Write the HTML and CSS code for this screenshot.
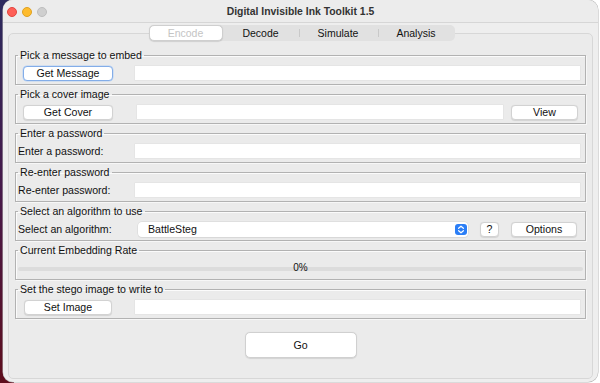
FILE: index.html
```html
<!DOCTYPE html>
<html lang="en">
<head>
<meta charset="utf-8">
<title>Digital Invisible Ink Toolkit 1.5</title>
<link rel="stylesheet" href="styles.css">
</head>
<body>
<div class="desk">
  <div class="window">
    <div class="titlebar">
      <div class="lights">
        <span class="light red"></span>
        <span class="light yellow"></span>
        <span class="light gray"></span>
      </div>
      <div class="title">Digital Invisible Ink Toolkit 1.5</div>
      <div></div>
    </div>

    <div class="tabs">
      <span class="tab active t-encode">Encode</span>
      <span class="tab t-decode">Decode</span>
      <span class="tab t-simulate divided">Simulate</span>
      <span class="tab t-analysis divided">Analysis</span>
    </div>

    <div class="pane">
      <fieldset class="group">
        <legend>Pick a message to embed</legend>
        <div class="row">
          <div class="lead"><button class="btn lead-btn focus">Get Message</button></div>
          <div class="field"></div>
        </div>
      </fieldset>

      <fieldset class="group">
        <legend>Pick a cover image</legend>
        <div class="row">
          <div class="lead lead-cover"><button class="btn lead-btn">Get Cover</button></div>
          <div class="field"></div>
          <button class="btn view">View</button>
        </div>
      </fieldset>

      <fieldset class="group">
        <legend>Enter a password</legend>
        <div class="row">
          <div class="lead lead-pw">Enter a password:</div>
          <div class="field"></div>
        </div>
      </fieldset>

      <fieldset class="group">
        <legend>Re-enter password</legend>
        <div class="row">
          <div class="lead lead-pw">Re-enter password:</div>
          <div class="field"></div>
        </div>
      </fieldset>

      <fieldset class="group">
        <legend>Select an algorithm to use</legend>
        <div class="row">
          <div class="lead lead-algo">Select an algorithm:</div>
          <div class="select">
            <span class="select-text">BattleSteg</span>
            <svg class="stepper" width="12" height="11" viewBox="0 0 12 11">
              <rect x="0" y="0" width="12" height="11" rx="3" fill="#2b7ef6"/>
              <path d="M3.6 4.3 L6 2.2 L8.4 4.3" fill="none" stroke="#fff" stroke-width="1.2" stroke-linecap="round" stroke-linejoin="round"/>
              <path d="M3.6 6.7 L6 8.8 L8.4 6.7" fill="none" stroke="#fff" stroke-width="1.2" stroke-linecap="round" stroke-linejoin="round"/>
            </svg>
          </div>
          <button class="btn help">?</button>
          <button class="btn options">Options</button>
        </div>
      </fieldset>

      <fieldset class="group rate">
        <legend>Current Embedding Rate</legend>
        <div class="row progress">
          <div class="bar"></div>
          <div class="bar-text">0%</div>
        </div>
      </fieldset>

      <fieldset class="group">
        <legend>Set the stego image to write to</legend>
        <div class="row">
          <div class="lead"><button class="btn lead-btn set">Set Image</button></div>
          <div class="field"></div>
        </div>
      </fieldset>

      <div class="go-row">
        <button class="btn go">Go</button>
      </div>
    </div>
  </div>
</div>
</body>
</html>
```

FILE: styles.css
```css
html, body {
  margin: 0;
  padding: 0;
}

body {
  width: 600px;
  height: 383px;
  overflow: hidden;
  background: #ffffff;
  font-family: "Liberation Sans", Arial, sans-serif;
  font-size: 10.6px;
  color: #111111;
}

.desk {
  box-sizing: border-box;
  height: 383px;
  padding-left: 3px;
  background:
    linear-gradient(180deg, #2c2a5e 0%, #47194a 50%, #5e0e1d 100%) left top / 14px 100% no-repeat,
    #ffffff;
}

.window {
  box-sizing: border-box;
  width: 595px;
  height: 382px;
  background: #eeeeee;
  border-radius: 10px;
  box-shadow: 0 0 0 0.5px #b5b5b5;
  display: flex;
  flex-direction: column;
  overflow: hidden;
}

/* Title bar */
.titlebar {
  height: 22px;
  border-bottom: 1px solid #d6d6d6;
  display: grid;
  grid-template-columns: 1fr auto 1fr;
  align-items: center;
  background: #ececec;
}

.lights {
  display: flex;
  gap: 5px;
  padding-left: 4px;
  padding-top: 2px;
}

.light {
  width: 10px;
  height: 10px;
  border-radius: 50%;
  box-sizing: border-box;
}

.red { background: #fe5f57; border: 0.5px solid #e2463f; }
.yellow { background: #febc2e; border: 0.5px solid #dea123; }
.gray { background: #cfcfcf; border: 0.5px solid #bdbdbd; }

.title {
  font-weight: bold;
  font-size: 10.4px;
  color: #333333;
}

/* Tabs */
.tabs {
  align-self: center;
  margin-top: 2px;
  height: 16px;
  display: flex;
  background: #e1e1e1;
  border-radius: 5px;
  position: relative;
  z-index: 1;
  margin-left: 2px;
}

.tab {
  height: 16px;
  line-height: 16px;
  text-align: center;
  font-size: 10.5px;
  color: #111111;
  box-sizing: border-box;
}

.t-encode { width: 74px; }
.t-decode { width: 76px; }
.t-simulate { width: 79px; }
.t-analysis { width: 77px; }

.tab.divided {
  background: linear-gradient(#c9c9c9, #c9c9c9) left center / 1px 8px no-repeat;
}

.tab.active {
  background: #ffffff;
  border: 0.5px solid #cfcfcf;
  border-radius: 5px;
  box-shadow: 0 0.5px 1px rgba(0, 0, 0, 0.12);
  color: #c4c4c4;
  line-height: 15px;
}

/* Tab pane */
.pane {
  flex: 1;
  margin: -8px 5px 3px;
  border: 1px solid #d7d7d7;
  border-radius: 5px;
  background: #ebebeb;
  padding: 15px 6px 0;
}

.group {
  margin: 0 0 4px;
  padding: 4px 5px 3px 2px;
  border: 1px solid #b2b2b2;
  box-shadow: inset 1px 1px 0 rgba(255, 255, 255, 0.8), 1px 1px 0 rgba(255, 255, 255, 0.6);
  min-inline-size: 0;
}

.group + .group {
  margin-top: -1px;
}

.group legend {
  padding: 0 2px;
  line-height: 12px;
  font-size: 10.6px;
  color: #111111;
}

.row {
  display: flex;
  align-items: center;
  height: 16px;
}

.lead {
  width: 117px;
  flex: none;
  color: #111111;
}

.lead-cover { width: 119px; }
.lead-algo { width: 120px; }

.btn {
  font-family: inherit;
  font-size: 10.6px;
  color: #111111;
  background: #ffffff;
  border: 0.5px solid #d2d2d2;
  border-radius: 4px;
  box-shadow: 0 0.5px 1px rgba(0, 0, 0, 0.1);
  height: 15px;
  padding: 0;
  line-height: 13px;
  box-sizing: border-box;
}

.lead-btn {
  display: block;
  width: 90px;
  margin-left: 5px;
}

.lead-btn.set { width: 88px; margin-left: 6px; }

.btn.focus {
  border: 1px solid #83ade8;
  box-shadow: 0 0 0 0.5px #b8d2f4;
}

.field {
  flex: 1;
  height: 14px;
  background: #ffffff;
  box-shadow: 0 0 0 0.5px #e0e0e0;
}

.btn.view {
  width: 67px;
  margin-left: 8px;
  margin-right: 2px;
}

.select {
  flex: 1;
  height: 15px;
  background: #ffffff;
  border-radius: 4px;
  box-shadow: 0 0 0 0.5px #d6d6d6, 0 0.5px 1px rgba(0, 0, 0, 0.08);
  display: flex;
  align-items: center;
  justify-content: space-between;
  padding: 0 1px 0 10px;
}

.select-text {
  color: #111111;
}

.stepper {
  display: block;
}

.btn.help {
  width: 19px;
  margin-left: 12px;
}

.btn.options {
  width: 66px;
  margin-left: 12px;
  margin-right: 3px;
}

/* Progress */
.group.rate {
  padding-right: 2px;
}

.progress {
  display: grid;
  align-items: center;
  justify-items: center;
}

.bar,
.bar-text {
  grid-area: 1 / 1;
}

.bar {
  width: 100%;
  height: 4px;
  border-radius: 2px;
  background: #dcdcdc;
  margin-top: 2px;
}

.bar-text {
  font-size: 10px;
  color: #111111;
  line-height: 12px;
}

/* Go */
.go-row {
  display: flex;
  justify-content: center;
  margin-top: 13px;
}

.btn.go {
  width: 112px;
  height: 26px;
  border-radius: 5px;
  border: 0.5px solid #d0d0d0;
}
```
